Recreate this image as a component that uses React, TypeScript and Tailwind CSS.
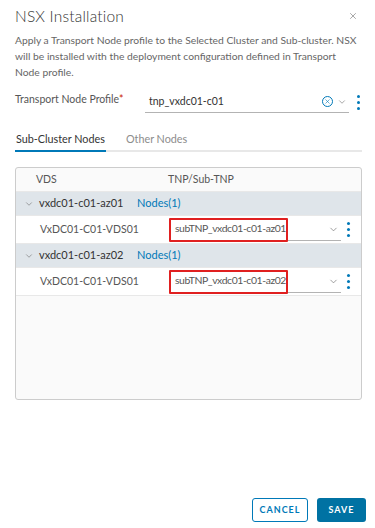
import { ChevronDown, X } from "lucide-react";

const font = { fontFamily: "Lato, 'Liberation Sans', sans-serif" };

function Dots() {
  return (
    <div className="flex flex-col items-center gap-[3px] w-[4px]">
      <span className="w-[3px] h-[3px] rounded-full bg-[#0079b8]" />
      <span className="w-[3px] h-[3px] rounded-full bg-[#0079b8]" />
      <span className="w-[3px] h-[3px] rounded-full bg-[#0079b8]" />
    </div>
  );
}

function GroupRow({ name }: { name: string }) {
  return (
    <div className="flex items-center h-[24px] bg-[#dfe5ea] border-b border-[#e8e8e8]">
      <div className="flex items-center w-[121px] pl-[8px] gap-[5px]">
        <ChevronDown size={10} strokeWidth={1.5} className="text-[#737373]" />
        <span className="text-[11px] text-[#333]">{name}</span>
      </div>
      <span className="text-[11px] text-[#0079b8]">Nodes(1)</span>
    </div>
  );
}

function NodeRow({ value }: { value: string }) {
  return (
    <div className="flex items-center h-[28px] bg-white border-b border-[#e8e8e8]">
      <div className="w-[153px] pl-[24px] text-[10.5px] text-[#565656]">
        VxDC01-C01-VDS01
      </div>
      <div className="flex items-center w-[172px] h-[23px] border-b border-[#b3b3b3] relative">
        <div className="absolute left-0 top-0 w-[119px] h-[24px] border-2 border-[#e02020] rounded-[1px]" />
        <span className="pl-[6px] text-[10.4px] tracking-[-0.4px] text-[#565656]">{value}</span>
        <ChevronDown size={11} strokeWidth={1.5} className="ml-auto mr-[2px] text-[#737373]" />
      </div>
      <div className="ml-[5px]">
        <Dots />
      </div>
    </div>
  );
}

export default function App() {
  return (
    <div className="w-[375px] h-[528px] bg-white flex flex-col px-[15px]" style={font}>

      {/* HEADER */}

      <div className="flex items-center justify-between pt-[5px]">
        <h1 className="text-[15.5px] font-light text-[#333] leading-[22px] tracking-[0.2px]">NSX Installation</h1>
        <X size={10} strokeWidth={1.5} className="text-[#737373] mr-[2px]" />
      </div>

      <p className="mt-[5px] w-[350px] text-[10.3px] leading-[16px] text-[#666]">
        Apply a Transport Node profile to the Selected Cluster and Sub-cluster. NSX
        <br />
        will be installed with the deployment configuration defined in Transport
        <br />
        Node profile.
      </p>

      {/* PROFILE */}

      <div className="flex items-center mt-[12px] h-[20px]">
        <div className="w-[130px] text-[10.5px] text-[#565656] self-start">
          Transport Node Profile<span className="text-[#c92100]">*</span>
        </div>
        <div className="flex items-center w-[204px] h-[21px] border-b border-[#b3b3b3]">
          <span className="pl-[4px] text-[10.5px] text-[#333]">tnp_vxdc01-c01</span>
          <div className="ml-auto flex items-center justify-center w-[11px] h-[11px] rounded-full border border-[#0079b8]">
            <X size={7} strokeWidth={2} className="text-[#0079b8]" />
          </div>
          <ChevronDown size={10} strokeWidth={1.5} className="ml-[4px] mr-[2px] text-[#737373]" />
        </div>
        <div className="ml-[7px]">
          <Dots />
        </div>
      </div>

      {/* TABS */}

      <div className="flex mt-[19px] border-b-2 border-[#e8e8e8] w-[347px]">
        <div className="text-[10.8px] text-[#333] pb-[3px] border-b-2 border-[#0079b8] -mb-[2px] px-[1px]">
          Sub-Cluster Nodes
        </div>
        <div className="text-[10.8px] text-[#8c8c8c] ml-[20px] pb-[3px]">Other Nodes</div>
      </div>

      {/* TABLE */}

      <div className="mt-[15px] w-[347px] h-[233px] border border-[#ccc] rounded-[3px] bg-[#fafafa] overflow-hidden">
        <div className="flex items-center h-[24px] border-b border-[#e8e8e8] text-[10.5px] text-[#565656]">
          <span className="w-[152px] pl-[20px]">VDS</span>
          <span>TNP/Sub-TNP</span>
        </div>
        <GroupRow name="vxdc01-c01-az01" />
        <NodeRow value="subTNP_vxdc01-c01-az01" />
        <GroupRow name="vxdc01-c01-az02" />
        <NodeRow value="subTNP_vxdc01-c01-az02" />
      </div>

      {/* FOOTER */}

      <div className="mt-auto mb-[6px] flex justify-end gap-[9px] -mr-[6px]">
        <button className="w-[56px] h-[24px] border border-[#0079b8] rounded-[3px] text-[9px] font-bold tracking-[1px] text-[#0079b8] bg-white">
          CANCEL
        </button>
        <button className="w-[49px] h-[24px] rounded-[3px] bg-[#0072a3] text-[9px] font-bold tracking-[1px] text-white">
          SAVE
        </button>
      </div>

    </div>
  );
}
